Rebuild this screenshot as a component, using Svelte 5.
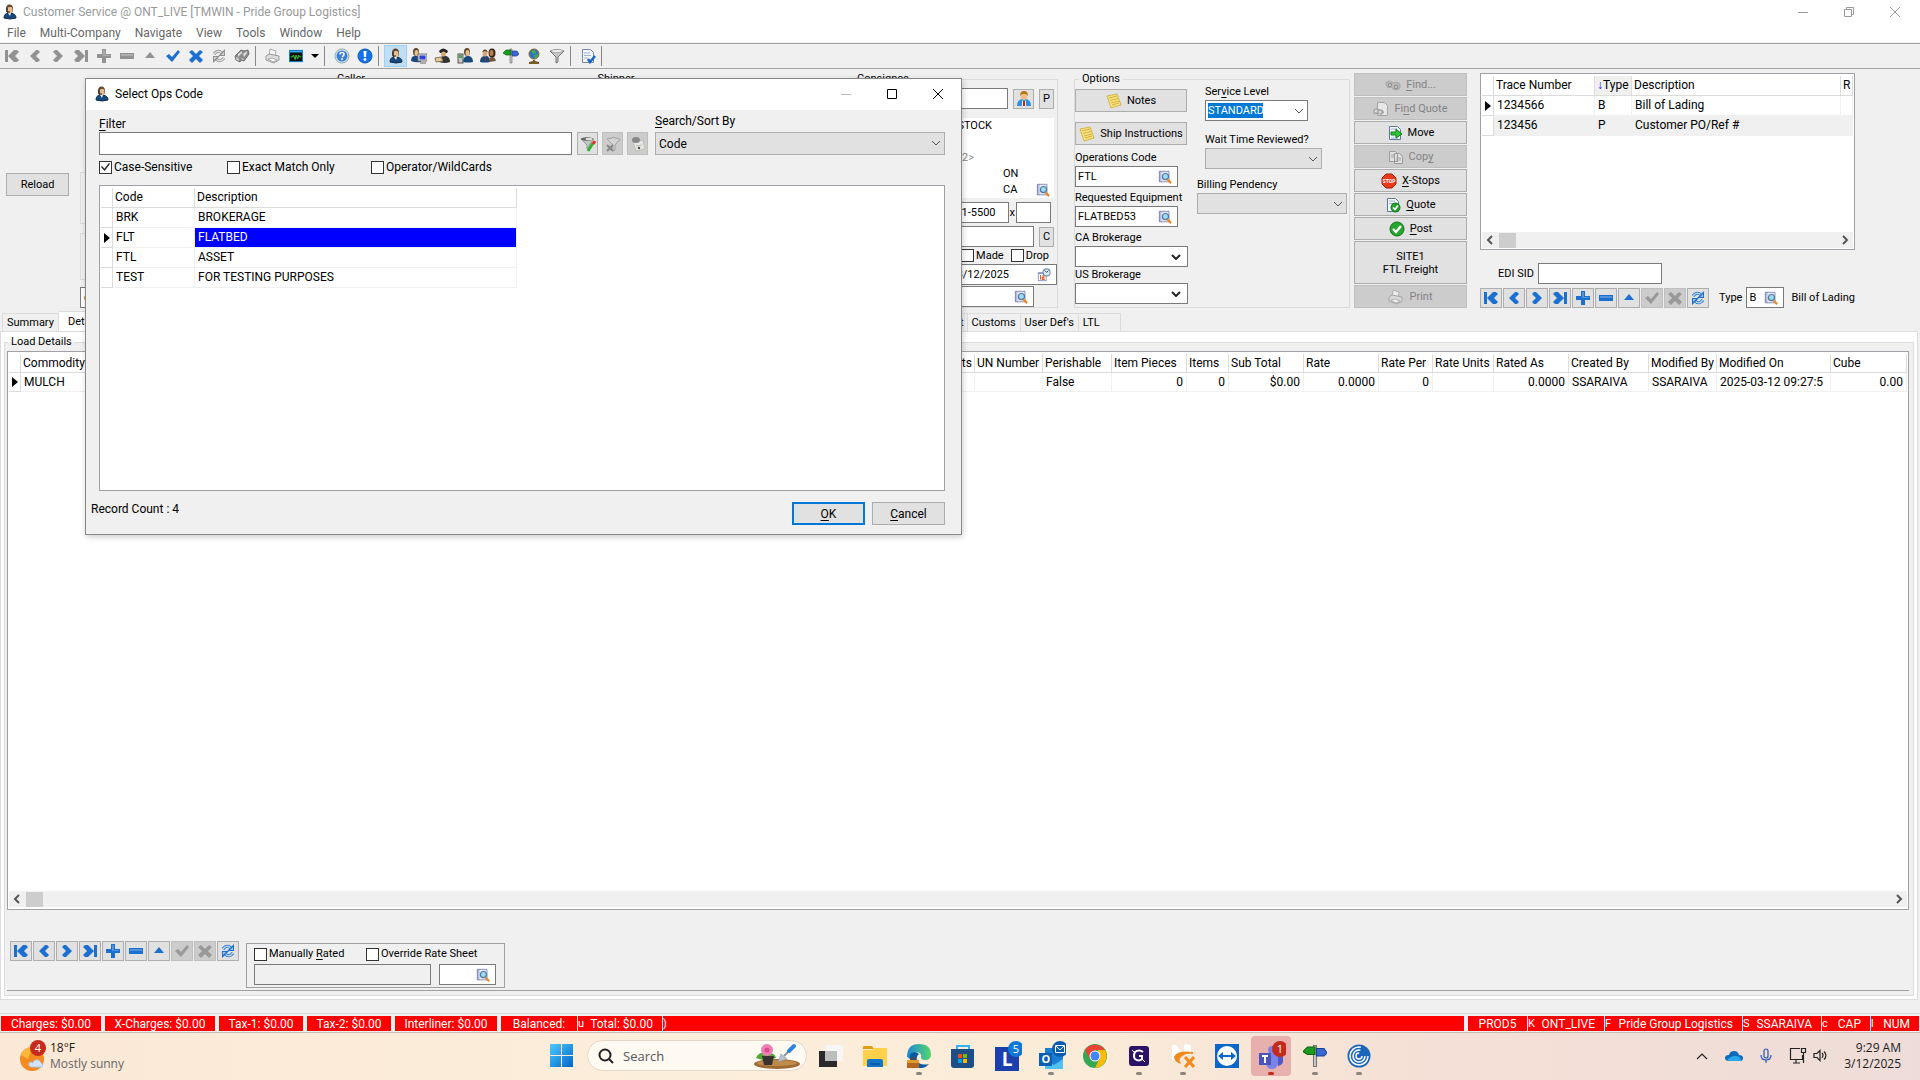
<script>
  const icons = {
    first: '<path fill="currentColor" d="M1 2h3v12H1zM10 2h3l2 2-4 4 4 4-2 2h-3L4 8z"/>',
    prev: '<path fill="currentColor" d="M9 2h2l2 2-4 4 4 4-2 2H9L3 8z"/>',
    next: '<path fill="currentColor" d="M7 2H5L3 4l4 4-4 4 2 2h2l6-6z"/>',
    last: '<path fill="currentColor" d="M12 2h3v12h-3zM6 2H3L1 4l4 4-4 4 2 2h3l6-6z"/>',
    add: '<path fill="currentColor" d="M6 1h4v5h5v4h-5v5H6v-5H1V6h5z"/><path fill="#fff" opacity=".25" d="M7 2h2v5h5v1H7z"/>',
    del: '<path fill="currentColor" d="M1 5h14v6H1z"/><path fill="#fff" opacity=".25" d="M2 6h12v2H2z"/>',
    edit: '<path fill="currentColor" d="M8 4l5 6H3z"/>',
    ok: '<path fill="currentColor" d="M1 8l3-2 3 3 6-7 2 2-8 10z"/>',
    cancel: '<path fill="currentColor" d="M1 4l3-2 4 4 4-4 3 2-4 4 4 4-3 3-4-4-4 4-3-3 4-4z"/>',
    refresh:
      '<path fill="none" stroke="currentColor" stroke-width="3" d="M3 6q4-5 8-1M13 10q-4 5-8 1"/><path fill="none" stroke="#fff" opacity=".7" stroke-width="1.400" d="M3 6q4-5 8-1M13 10q-4 5-8 1"/><path fill="currentColor" d="M14 1v7H7zM2 15V8h7z"/><path fill="#fff" opacity=".6" d="M13 4v3h-3zM3 12V9h3z"/>',
    binoculars:
      '<path fill="#8b8b8b" stroke="#6f6f6f" d="M1 8l6-6 3 1 4-1 1 4-5 7-3-1-1 2-4-2z"/><path fill="#ddd" d="M4 6l4-3v2L4 9zM9 6l4-3v2l-3 4z"/><path fill="#c4c4c4" d="M2 9l3 1v3l-3-1zM8 10l2 1-1 1-2-1z"/>',
    print:
      '<path fill="#f4f4f4" stroke="#aaa" d="M4 8L5 1l6 2-1 5z"/><path fill="#ddd" stroke="#999" d="M1 8l3-2 10 2v4l-5 3-8-3z"/><path fill="#fff" stroke="#aaa" d="M3 11l4-1 5 2-4 2z"/>',
    monitor:
      '<rect x="0.500" y="1.500" width="15" height="13" fill="#0a120a" stroke="#0a84e0"/><rect x="1" y="2" width="14" height="2" fill="#3aa0f0"/><path fill="none" stroke="#3ddc3d" d="M2 9h2l1-2 2 5 1-5 2 4 1-4 1 2h2"/>',
    help: '<circle cx="8" cy="8" r="7" fill="#dfe8f4" stroke="#8aa"/><circle cx="8" cy="8" r="5.500" fill="#3a7fd8"/><path fill="none" stroke="#fff" stroke-width="1.600" d="M6 6.500q0-2 2-2t2 2q0 1-2 2.300"/><circle cx="8" cy="11" r="1" fill="#fff"/>',
    info: '<circle cx="8" cy="8" r="7" fill="#1473e6" stroke="#0b56b0"/><path fill="#fff" d="M6.500 3h3L9 9H7z"/><circle cx="8" cy="11.500" r="1.400" fill="#fff"/>',
    agent:
      '<path fill="#174a7c" stroke="#0c2c50" d="M2 14q0-5 5-5h2q5 1 5 5-6 2-12 0z"/><ellipse cx="7.500" cy="5" rx="3.500" ry="4.500" fill="#5a4630"/><ellipse cx="8" cy="6" rx="2.500" ry="3.300" fill="#e9bd8e"/><path fill="none" stroke="#222" d="M5 4v4h3"/><path fill="#dfeaf4" d="M6 9h3l-1 3z"/>',
    agentPc:
      '<path fill="#174a7c" d="M0 13q0-5 4-5h2q4 1 4 6-5 1-10-1z"/><ellipse cx="5" cy="4" rx="3" ry="4" fill="#5a4630"/><ellipse cx="5.500" cy="5" rx="2" ry="3" fill="#e9bd8e"/><rect x="7" y="6" width="9" height="7" fill="#dcdcdc" stroke="#777"/><rect x="8.500" y="7.500" width="6" height="4" fill="#3144d8"/><path fill="#aaa" d="M9 14h6v2H9z"/>',
    driver:
      '<path fill="#333" d="M5 14q0-5 4-6h3q4 1 4 6-5 2-11 0z"/><path fill="#222" d="M5 3q4-5 9 0l-1 2H6z"/><ellipse cx="9.500" cy="6" rx="2.500" ry="2.500" fill="#d6a878"/><path fill="#e0c89a" stroke="#8a7a58" d="M1 10l6-1 2 4-7 1z"/>',
    agentPhone:
      '<path fill="#174a7c" d="M6 14q0-5 4-6h2q4 1 4 6-5 1-10 0z"/><ellipse cx="10" cy="4" rx="3" ry="4" fill="#5a4630"/><ellipse cx="10.500" cy="5" rx="2" ry="3" fill="#e9bd8e"/><rect x="1" y="6" width="5" height="9" fill="#c8ccc8" stroke="#555"/><rect x="2" y="7" width="3" height="3" fill="#47a846"/>',
    people:
      '<path fill="#174a7c" d="M0 14q0-5 4-6h3q3 1 3 6-5 1-10 0z"/><path fill="#a03030" d="M5 9h1v4H5z"/><ellipse cx="5" cy="5" rx="2.500" ry="3.500" fill="#d9a878"/><path fill="#4b3725" d="M2 4q3-5 6 0L5 3z"/><path fill="#7a5238" d="M9 14q0-5 3-5t4 4z"/><ellipse cx="12" cy="5" rx="3.500" ry="4.500" fill="#3a2618"/><ellipse cx="11.500" cy="5" rx="2" ry="3" fill="#b87e55"/>',
    sign: '<path fill="#c8c8c8" stroke="#777" stroke-width=".700" d="M7 1h2v14H7z"/><path fill="#1d9a1d" stroke="#0d630d" stroke-width=".700" d="M0 5l3-3h5v5H3z"/><path fill="#3a67d0" stroke="#1c3f96" stroke-width=".700" d="M9 3h5l2 3-2 2H9z"/>',
    globe:
      '<circle cx="8" cy="6" r="5" fill="#2f74c8" stroke="#8a6a2a"/><path fill="#3fae49" d="M5 3l4-1 1 3-3 1zM8 7l4-1-1 4-2 0z"/><path fill="#7a5a22" d="M7 12h2v1l4 1v2H3v-2l4-1z"/>',
    funnel:
      '<path fill="#c6c6c6" stroke="#777" d="M1 3q7-3 14 0L9 9v5l-2 1V9z"/><ellipse cx="8" cy="3" rx="6" ry="1.500" fill="#f2f2f2" stroke="#888" stroke-width=".600"/>',
    funnelGo:
      '<path fill="#c6c6c6" stroke="#999" d="M1 3q6-3 13 0L9 9v3l-2 1V9z"/><ellipse cx="7" cy="3" rx="6" ry="1.700" fill="#666"/><ellipse cx="9" cy="3" rx="3.500" ry="1.200" fill="#ddd"/><path stroke="#2db52d" stroke-width="3" d="M8 15l5-8"/><path stroke="#e03030" stroke-width="3" d="M13 8l2-3"/>',
    funnelOff:
      '<path fill="#d8d8d8" stroke="#999" d="M2 3q7-3 13 0l-5 6v5l-2 1V9z"/><path stroke="#777" stroke-width="2" d="M2 9l6 6M8 9l-6 6"/>',
    funnelDoc: '<path fill="#eeeee6" stroke="#bbb" d="M3 6l10-2 2 9-9 2z"/><ellipse cx="6" cy="4" rx="4" ry="3" fill="#777"/><path stroke="#bbb" d="M6 10l6-1"/><circle cx="9" cy="12" r="1.200" fill="#333"/>',
    docCheck:
      '<path fill="#f5f8fd" stroke="#7686a8" d="M2.500 1.500h8l3 3v10h-11z"/><path stroke="#9db0d0" d="M4 5h6M4 7.500h7M4 10h4"/><path fill="none" stroke="#1565c8" stroke-width="2.500" d="M8 11l2 3 5-6"/>',
    lookup:
      '<path fill="#b9bfe2" stroke="#7077a8" d="M1.500 1.500h11v12h-11z"/><path fill="#e3e6f5" d="M4 2h8v11H4z"/><circle cx="8.500" cy="7.500" r="3.500" fill="#9bdcf5" stroke="#56799a" stroke-width="1.400"/><path stroke="#e88a28" stroke-width="2.500" d="M11 11l4 4"/>',
    calendar:
      '<rect x="1.500" y="5.500" width="9" height="9" fill="#fff" stroke="#8090c0"/><path fill="#8f96c8" d="M1 5h10v2H1z"/><path fill="none" stroke="#e06030" stroke-width="1.200" d="M4 8v5M6 9h2v2H6v2h3"/><circle cx="11" cy="5" r="4" fill="#d9ecf8" stroke="#6c8fae" stroke-width="1.200"/><path fill="none" stroke="#333" d="M9 3l2 2 2-2"/>',
    person:
      '<path fill="#2f8fe0" d="M1 15q0-6 5-7h4q5 1 5 7z"/><ellipse cx="8" cy="5" rx="3" ry="4" fill="#f0bd80"/><path fill="#b8761c" d="M4 5q0-5 4-5t4 5l-2-2H6z"/><path fill="#fff" d="M6 9l2 3 2-3v6H6z"/><path fill="#d02020" d="M7 10h2v5H7z"/>',
    note: '<path fill="#f7e37a" stroke="#c9a93a" stroke-width=".800" d="M1 3l10-2 4 11-10 3z"/><path stroke="#d8ae48" d="M3 5l8-2M4 7.500l8-2M5 10l8-2M6 12l7-2"/>',
    findGray:
      '<path fill="#b5b5b5" stroke="#8f8f8f" stroke-width=".700" d="M1 5l4-1 3 2 4-1 3 2v4l-3 2-4-1-2-2-3 1-2-3z"/><circle cx="5" cy="8" r="2" fill="#777"/><circle cx="11" cy="10" r="2.200" fill="#808080"/><circle cx="5" cy="8" r="1" fill="#ddd"/><circle cx="11" cy="10" r="1" fill="#ddd"/>',
    findQuote:
      '<path fill="#eee" stroke="#999" d="M4.500 1.500h7l3 3v10h-10z"/><path fill="#999" d="M0 9l3-2 3 1 4 1 1 3-3 2-3-1-4 0z"/><circle cx="3" cy="10" r="1.500" fill="#ddd"/><circle cx="7" cy="11" r="1.500" fill="#ddd"/>',
    move: '<path fill="#f5f8fd" stroke="#5e7898" d="M2.500 1.500h8l3 3v10h-11z"/><path stroke="#9db0d0" d="M4 4h6M4 13h7"/><path fill="#2fc43a" stroke="#147a1c" d="M4 7h5V4l6 5-6 4v-3H4z"/>',
    copy: '<path fill="#e6e6e6" stroke="#8f8f8f" d="M1.500 2.500h6l2 2v8h-8zM6.500 4.500h5l3 3v7h-8z"/><path stroke="#999" d="M3 6h3M3 8h3M8 9h5M8 11h5"/>',
    quote:
      '<path fill="#f5f8fd" stroke="#5e7898" d="M2.500 1.500h8l3 3v10h-11z"/><path stroke="#9db0d0" d="M4 4h6M4 6.500h6"/><circle cx="10.500" cy="10.500" r="4.500" fill="#25a52d" stroke="#0e7416"/><path fill="none" stroke="#fff" stroke-width="1.600" d="M8 10.500l2 2 3-4"/>',
    post: '<circle cx="8" cy="8" r="7" fill="#25a52d" stroke="#0e7416"/><path fill="none" stroke="#fff" stroke-width="2.400" d="M4 8l3 3 5-6"/>',
  };

  const tools = ['first', 'prev', 'next', 'last', 'add', 'del', 'edit', 'ok', 'cancel', 'refresh', 'binoculars'];
  const people = ['agent', 'agentPc', 'driver', 'agentPhone', 'people', 'sign', 'globe', 'funnel'];
  const navs = ['first', 'prev', 'next', 'last', 'add', 'del', 'edit', 'ok', 'cancel', 'refresh'];
  const menus = ['File', 'Multi-Company', 'Navigate', 'View', 'Tools', 'Window', 'Help'];

  const codes = [
    ['BRK', 'BROKERAGE'],
    ['FLT', 'FLATBED'],
    ['FTL', 'ASSET'],
    ['TEST', 'FOR TESTING PURPOSES'],
  ];
  let selected = $state('FLT');
  let caseSensitive = $state(true);

  // title, width, value, right aligned
  const columns = [
    ['UN Number', 68, ''],
    ['Perishable', 69, 'False'],
    ['Item Pieces', 75, '0', true],
    ['Items', 42, '0', true],
    ['Sub Total', 75, '$0.00', true],
    ['Rate', 75, '0.0000', true],
    ['Rate Per', 54, '0', true],
    ['Rate Units', 61, ''],
    ['Rated As', 75, '0.0000', true],
    ['Created By', 80, 'SSARAIVA'],
    ['Modified By', 68, 'SSARAIVA'],
    ['Modified On', 114, '2025-03-12 09:27:5'],
    ['Cube', 76, '0.00', true],
  ];

  const totals = [
    ['Charges: $0.00', 100],
    ['X-Charges: $0.00', 110],
    ['Tax-1: $0.00', 84],
    ['Tax-2: $0.00', 84],
    ['Interliner: $0.00', 102],
    ['Balanced:', 76],
  ];
  const session = [
    ['PROD5', 59, ''],
    ['ONT_LIVE', 76, 'K'],
    ['Pride Group Logistics', 137, 'F'],
    ['SSARAIVA', 78, 'S'],
    ['CAP', 48, 'c'],
    ['NUM', 48, 'l'],
  ];
</script>

{#snippet icon(name, size = 16)}
  <svg class="icon" width={size} height={size} viewBox="0 0 16 16" aria-hidden="true">{@html icons[name]}</svg>
{/snippet}

{#snippet dropdown(label, value, kind)}
  <span class="dropdown {kind}">
    <select aria-label={label}><option>{value}</option></select>
    <svg width="10" height="6" viewBox="0 0 10 6"><path d="M1 1l4 4 4-4" /></svg>
  </span>
{/snippet}

{#snippet lookup(label, value, glyph = 'lookup')}
  <span class="field">
    <input type="text" aria-label={label} {value} />
    <button aria-label="Look up {label}">{@render icon(glyph, 14)}</button>
  </span>
{/snippet}

{#snippet navigator()}
  <div class="navigator">
    {#each navs as name}
      <button class={name} aria-label={name} disabled={name === 'ok' || name === 'cancel'}>{@render icon(name)}</button>
    {/each}
  </div>
{/snippet}

{#snippet scrollbar()}
  <div class="scrollbar">
    <svg width="8" height="10" viewBox="0 0 8 10"><path d="M6 1L2 5l4 4" /></svg>
    <span class="thumb"></span>
    <svg width="8" height="10" viewBox="0 0 8 10"><path d="M2 1l4 4-4 4" /></svg>
  </div>
{/snippet}

<div class="desktop">
  <header class="titlebar">
    {@render icon('agent')}
    <h1>Customer Service @ ONT_LIVE [TMWIN - Pride Group Logistics]</h1>
    <div class="caption">
      <button aria-label="Minimize"><svg width="10" height="10" viewBox="0 0 10 10"><path d="M0 5.500h10" /></svg></button>
      <button aria-label="Restore"
        ><svg width="10" height="10" viewBox="0 0 10 10"><path d="M.500 2.500h7v7h-7zM2.500 2.500v-2h7v7h-2" /></svg></button
      >
      <button aria-label="Close"><svg width="10" height="10" viewBox="0 0 10 10"><path d="M0 0l10 10M10 0L0 10" /></svg></button>
    </div>
  </header>

  <nav class="menubar">
    {#each menus as menu}<button>{menu}</button>{/each}
  </nav>

  <div class="toolbar">
    {#each tools as name}
      <button class={name} aria-label={name}>{@render icon(name)}</button>
    {/each}
    <span class="sep"></span>
    <button aria-label="Print">{@render icon('print')}</button>
    <button aria-label="Monitor">{@render icon('monitor', 14)}</button>
    <button class="more" aria-label="More"><span class="caret"></span></button>
    <span class="sep"></span>
    <button aria-label="Help">{@render icon('help')}</button>
    <button aria-label="Information">{@render icon('info')}</button>
    <span class="sep"></span>
    {#each people as name}
      <button class={name} aria-label={name}>{@render icon(name)}</button>
    {/each}
    <span class="sep"></span>
    <button aria-label="Report">{@render icon('docCheck')}</button>
    <span class="sep"></span>
  </div>

  <section class="order">
    <div class="parties">
      <div class="reload"><button class="push">Reload</button></div>
      <div class="stubs">
        <div class="stub tall"></div>
        <div class="stub"></div>
        <input type="text" aria-label="Carrier" value="c" />
      </div>
      <fieldset class="party"><legend>Caller</legend></fieldset>
      <fieldset class="party"><legend>Shipper</legend></fieldset>
    </div>

    <fieldset class="consignee">
      <legend>Consignee</legend>
      <div class="row">
        <input type="text" aria-label="Consignee code" />
        <button class="push square" aria-label="Contact">{@render icon('person')}</button>
        <button class="push letter">P</button>
      </div>
      <div class="address">
        <span class="right">STOCK</span><span></span>
        <span></span><span></span>
        <span class="right hint">2&gt;</span><span></span>
        <span></span><span>ON</span>
        <span></span><span class="country">CA {@render icon('lookup', 14)}</span>
      </div>
      <div class="row phone">
        <input type="text" class="right" aria-label="Phone" value="1-5500" />
        <label for="ext">x</label>
        <input type="text" id="ext" class="ext" />
      </div>
      <div class="row">
        <input type="text" aria-label="Email" />
        <button class="push letter">C</button>
      </div>
      <div class="row checks">
        <label><input type="checkbox" />Made</label>
        <label><input type="checkbox" />Drop</label>
      </div>
      <div class="row date">{@render lookup('Deliver by', '3/12/2025', 'calendar')}</div>
      <div class="row zone">{@render lookup('Zone', '')}</div>
    </fieldset>

    <fieldset class="options">
      <legend>Options</legend>
      <div class="codes">
        <button class="push">{@render icon('note')}Notes</button>
        <button class="push">{@render icon('note')}Ship Instructions</button>
        <span class="label">Operations Code</span>
        {@render lookup('Operations Code', 'FTL')}
        <span class="label">Requested Equipment</span>
        {@render lookup('Requested Equipment', 'FLATBED53')}
        <span class="label">CA Brokerage</span>
        {@render dropdown('CA Brokerage', '', 'bold')}
        <span class="label">US Brokerage</span>
        {@render dropdown('US Brokerage', '', 'bold')}
      </div>
      <div class="levels">
        <span class="label service">Ser<u>v</u>ice Level</span>
        {@render dropdown('Service Level', 'STANDARD', 'active')}
        <span class="label">Wait Time Reviewed?</span>
        {@render dropdown('Wait Time Reviewed?', '', 'gray')}
        <div class="billing">
          <span class="label">Billing Pendency</span>
          {@render dropdown('Billing Pendency', '', 'gray')}
        </div>
      </div>
    </fieldset>

    <div class="actions">
      <button class="push" disabled>{@render icon('findGray')}<span><u>F</u>ind...</span></button>
      <button class="push" disabled>{@render icon('findQuote')}<span>Fi<u>n</u>d Quote</span></button>
      <button class="push">{@render icon('move')}Move</button>
      <button class="push" disabled>{@render icon('copy')}<span>Cop<u>y</u></span></button>
      <button class="push">
        <svg class="icon" width="16" height="16" viewBox="0 0 16 16" aria-hidden="true">
          <path fill="#e8391d" stroke="#a81e0c" d="M5 1h6l4 4v6l-4 4H5l-4-4V5z" />
          <text x="8" y="10" font-size="5" font-weight="bold" text-anchor="middle" fill="#fff">STOP</text>
        </svg>
        <span><u>X</u>-Stops</span>
      </button>
      <button class="push">{@render icon('quote')}<span><u>Q</u>uote</span></button>
      <button class="push">{@render icon('post')}<span><u>P</u>ost</span></button>
      <button class="push site">SITE1<br />FTL Freight</button>
      <button class="push" disabled>{@render icon('print')}Print</button>
    </div>

    <div class="trace">
      <div class="grid">
        <table>
          <colgroup><col class="mark" /><col class="number" /><col class="kind" /><col /><col class="rest" /></colgroup>
          <thead>
            <tr><th></th><th>Trace Number</th><th class="sorted"><i>↓</i>Type</th><th>Description</th><th>R</th></tr>
          </thead>
          <tbody>
            <tr><td><span class="pointer"></span></td><td>1234566</td><td>B</td><td>Bill of Lading</td><td></td></tr>
            <tr class="alt"><td></td><td>123456</td><td>P</td><td>Customer PO/Ref #</td><td></td></tr>
          </tbody>
        </table>
        {@render scrollbar()}
      </div>
      <div class="row edi">
        <label for="edi">EDI SID</label>
        <input type="text" id="edi" />
      </div>
      <div class="row document">
        {@render navigator()}
        <span>Type</span>
        {@render lookup('Type', 'B')}
        <span>Bill of Lading</span>
      </div>
    </div>
  </section>

  <div class="tabs">
    <button>Summary</button>
    <button class="current">Details</button>
    <button class="wide">Audit</button>
    <button>Customs</button>
    <button>User Def's</button>
    <button class="end">LTL</button>
  </div>

  <main class="page">
    <fieldset class="details">
      <legend>Load Details</legend>
      <div class="grid load">
        <table>
          <colgroup>
            <col class="mark" /><col /><col class="units" />
            {#each columns as [, width]}<col style="width: {width}px" />{/each}
          </colgroup>
          <thead>
            <tr>
              <th></th><th>Commodity</th><th class="num">Units</th>
              {#each columns as [title]}<th>{title}</th>{/each}
            </tr>
          </thead>
          <tbody>
            <tr>
              <td><span class="pointer"></span></td><td>MULCH</td><td></td>
              {#each columns as [, , value, num]}<td class:num>{value}</td>{/each}
            </tr>
          </tbody>
        </table>
        {@render scrollbar()}
      </div>
      <div class="rating">
        {@render navigator()}
        <div class="rates">
          <label><input type="checkbox" /><span>Manually <u>R</u>ated</span></label>
          <label><input type="checkbox" />Override Rate Sheet</label>
          <input type="text" class="sheet" aria-label="Rate" readonly />
          {@render lookup('Rate Sheet', '')}
        </div>
      </div>
    </fieldset>
  </main>

  <footer class="status">
    {#each totals as [text, width]}
      <span class="cell" style="width: {width}px">{text}</span>
    {/each}
    <span class="cell joined total"><i>u</i>Total: $0.00</span>
    <span class="cell joined fill"><i>)</i></span>
    {#each session as [text, width, cut]}
      <span class="cell" class:joined={cut} style="width: {width}px">{#if cut}<i>{cut}</i>{/if}{text}</span>
    {/each}
  </footer>

  <div class="taskbar">
    <button class="weather">
      <svg width="27" height="34" viewBox="0 0 27 34" aria-hidden="true">
        <circle cx="12" cy="20" r="12" fill="#f58a1f" />
        <path fill="#fbb738" d="M1 16A12 12 0 0 1 12 8l-4 12z" />
        <path fill="#d5e4fa" stroke="#a9c2ea" d="M11 28q-3-1-2-4 2-2 4 0 1-4 5-3 3 1 3 3 3 1 1 4z" />
        <circle cx="18" cy="9" r="8" fill="#c42b1c" />
        <text x="18" y="13" font-size="11" text-anchor="middle" fill="#fff">4</text>
      </svg>
      <span>18°F<br /><small>Mostly sunny</small></span>
    </button>
    <div class="apps">
      <button aria-label="Start">
        <svg width="24" height="24" viewBox="0 0 24 24">
          <defs><linearGradient id="win" x2="1" y2="1"><stop stop-color="#4cc9ff" /><stop offset="1" stop-color="#0067c8" /></linearGradient></defs>
          <path fill="url(#win)" d="M0 0h11v11H0zM12 0h11v11H12zM0 12h11v11H0zM12 12h11v11H12z" />
        </svg>
      </button>
      <label class="search">
        <svg width="16" height="16" viewBox="0 0 16 16"><circle cx="7" cy="7" r="5.500" /><path d="M11 11l4 4" /></svg>
        <input type="text" aria-label="Search" placeholder="Search" />
        <svg class="art" width="48" height="26" viewBox="0 0 48 26">
          <ellipse cx="24" cy="21" rx="23" ry="5" fill="#9c6a34" />
          <ellipse cx="24" cy="20" rx="20" ry="3" fill="#c08a4a" />
          <path fill="#4fa834" d="M3 15q4-8 10-3 8-4 10 3-10 4-20 0z" />
          <path fill="#3a3230" d="M9 13h12l-2 9h-8z" />
          <circle cx="14" cy="7" r="6" fill="#ee7fb4" /><circle cx="14" cy="7" r="2.500" fill="#d94a8e" />
          <path fill="#b8c2cc" stroke="#7c8894" stroke-width=".500" d="M25 19l3-8 6 5z" />
          <path stroke="#8a949e" stroke-width="2" d="M31 13l5-5" />
          <path stroke="#2a86d8" stroke-width="4" stroke-linecap="round" d="M36 8l5-5" />
        </svg>
      </label>
      <button aria-label="Task view">
        <svg width="24" height="24" viewBox="0 0 24 24"><path fill="#2a2a2a" d="M0 7h18v16H0z" /><path fill="#f6f6f6" d="M6 1h18v16H6z" /><path fill="#bdbdbd" d="M6 7h12v10H6z" /></svg>
      </button>
      <button aria-label="File Explorer">
        <svg width="24" height="24" viewBox="0 0 24 24"><path fill="#e09b10" d="M0 3q0-1 1-1h8l2 3H0z" /><path fill="#ffd04a" d="M0 6h8l3-2h13v18H0z" /><path fill="#1176c8" d="M4 17q0-2 2-2h12q2 0 2 2v6H4z" /><path fill="#0a5ba8" d="M7 19h10v2H7z" /></svg>
      </button>
      <button class="running" aria-label="Edge">
        <svg width="24" height="24" viewBox="0 0 24 24">
          <defs><linearGradient id="edge" x2="1"><stop stop-color="#1c8ad8" /><stop offset="1" stop-color="#55d66a" /></linearGradient></defs>
          <path fill="url(#edge)" d="M0 13Q0 0 12 0t12 11q0 5-6 5-4 0-4-3 1-4-4-5-6 0-7 7z" />
          <path fill="#0c59a4" d="M3 10q5-4 9 0-3 2-2 6 2 6 12 4-4 5-11 4Q1 20 3 10z" />
          <path fill="#b5651d" d="M0 16h12v8H0z" /><path fill="#e39a2c" d="M0 16h12v3H0z" /><path fill="none" stroke="#7a4210" d="M4 16v-2h4v2" />
        </svg>
      </button>
      <button aria-label="Store">
        <svg width="24" height="24" viewBox="0 0 24 24"><path fill="none" stroke="#33b2f0" stroke-width="2" d="M6 7V2h12v5" /><path fill="#1d4f86" d="M0 5h23v16q0 3-3 3H3q-3 0-3-3z" /><path fill="#f25022" d="M7 10h4v4H7z" /><path fill="#7fba00" d="M12 10h4v4h-4z" /><path fill="#00a4ef" d="M7 15h4v4H7z" /><path fill="#ffb900" d="M12 15h4v4h-4z" /></svg>
      </button>
      <button aria-label="Lookout">
        <svg width="30" height="30" viewBox="0 0 30 30"><path fill="#1d3fae" d="M3 6h24v24H3z" /><text x="15" y="25" font-size="19" font-weight="bold" text-anchor="middle" fill="#fff">L</text><circle cx="24" cy="8" r="8" fill="#0f78d4" /><text x="24" y="12" font-size="11" text-anchor="middle" fill="#fff">5</text></svg>
      </button>
      <button class="running" aria-label="Outlook">
        <svg width="30" height="30" viewBox="0 0 30 30"><path fill="#1a7fd4" d="M9 7h18v21H9z" /><path fill="#50c0f0" d="M9 18l9 6 9-6v10H9z" /><path fill="#0a5fb4" d="M3 12h13v13H3z" /><text x="10" y="22" font-size="11" font-weight="bold" text-anchor="middle" fill="#fff">O</text><circle cx="24" cy="8" r="8" fill="#0b5cb0" /><path fill="none" stroke="#fff" d="M19.500 4.500h9v7h-9zM20 5l4 4 4-4" /></svg>
      </button>
      <button aria-label="Chrome">
        <svg width="24" height="24" viewBox="0 0 24 24"><circle cx="12" cy="12" r="12" fill="#34a853" /><path fill="#ea4335" d="M2 6a12 12 0 0 1 20 0H12l-5 9z" /><path fill="#fbbc05" d="M22 6A12 12 0 0 1 12 24l5-10-2-8z" /><circle cx="12" cy="12" r="5.500" fill="#fff" /><circle cx="12" cy="12" r="4.500" fill="#4285f4" /></svg>
      </button>
      <button class="running" aria-label="Glance">
        <svg width="20" height="20" viewBox="0 0 20 20"><rect width="20" height="20" rx="3" fill="#2a1266" /><path fill="none" stroke="#fff" stroke-width="2" d="M14 6q-4-3-8 0-2 4 0 7 4 3 7 0v-3h-3" /><path stroke="#fff" d="M13 13l3 3M3 4l2 2" /></svg>
      </button>
      <button class="running" aria-label="NX">
        <svg width="24" height="24" viewBox="0 0 24 24"><path fill="#fff" d="M1 1q5-1 7 4l5 5V1q4-2 7 1v9H1z" /><path fill="#fff" d="M1 9h4v8H1z" /><path fill="#f08a1c" d="M22 8Q6 6 3 13q0 5 7 7-4-6 3-9 4-2 9-1z" /><path stroke="#f08a1c" stroke-width="3" d="M14 13l9 10M23 13l-9 10" /></svg>
      </button>
      <button aria-label="TeamViewer">
        <svg width="24" height="24" viewBox="0 0 24 24"><rect width="24" height="24" fill="#0a66c8" /><circle cx="12" cy="12" r="10" fill="#fff" /><path fill="#0a66c8" d="M3 12l5-4v3h8V8l5 4-5 4v-3H8v3z" /></svg>
      </button>
      <button class="running alert" aria-label="Teams">
        <svg width="30" height="30" viewBox="0 0 30 30"><circle cx="16" cy="9" r="4" fill="#7b83eb" /><path fill="#5059c9" d="M18 13h9v7q0 4-5 5z" /><path fill="#7b83eb" d="M10 13h12v9q-1 6-6 6t-6-5z" /><path fill="#4b53bc" d="M3 12h12v12H3z" /><path fill="none" stroke="#fff" stroke-width="2" d="M6 15h6M9 15v7" /><circle cx="24" cy="8" r="8" fill="#c42b1c" /><text x="24" y="12" font-size="11" text-anchor="middle" fill="#fff">1</text></svg>
      </button>
      <button class="running" aria-label="TMWIN">{@render icon('sign', 24)}</button>
      <button class="running" aria-label="Citrix">
        <svg width="24" height="24" viewBox="0 0 24 24"><circle cx="12" cy="12" r="11.500" fill="#1b66b8" /><circle class="ring" cx="12" cy="12" r="9" stroke-dasharray="44 13" /><circle class="ring" cx="12" cy="12" r="6" stroke-dasharray="29 9" /><circle class="ring" cx="12" cy="12" r="3" stroke-dasharray="14 5" /></svg>
      </button>
    </div>
    <div class="tray">
      <svg width="12" height="8" viewBox="0 0 12 8"><path d="M1 7l5-5 5 5" /></svg>
      <svg width="18" height="12" viewBox="0 0 18 12"><path class="cloud" d="M4 11q-4 0-4-3t4-3q1-4 5-4t5 4q4 0 4 3t-3 3z" /><path class="light" d="M2 10q4-4 8-4 6 0 6 5H4z" /></svg>
      <svg class="mic" width="12" height="16" viewBox="0 0 12 16"><rect x="4" y="1" width="4" height="9" rx="2" /><path d="M1 7q0 5 5 5t5-5M6 12v3" /></svg>
      <svg width="18" height="17" viewBox="0 0 18 17"><path d="M11 1.500H1.500v11h12V8M7 13v3M4 16h7M12.500 1.500h4v4h-4zM14.500 6v10" /></svg>
      <svg class="sound" width="16" height="13" viewBox="0 0 16 13"><path d="M1 4.500h3l3-3v10l-3-3H1zM9 4q2 2 0 5M11 2.500q4 4 0 8" /></svg>
      <time>9:29 AM<br />3/12/2025</time>
    </div>
  </div>

  <div class="dialog" role="dialog" aria-label="Select Ops Code">
    <header>
      {@render icon('agent')}
      <h2>Select Ops Code</h2>
      <div class="caption">
        <button class="off" aria-label="Minimize"><svg width="10" height="10" viewBox="0 0 10 10"><path d="M0 5.500h10" /></svg></button>
        <button aria-label="Maximize"><svg width="10" height="10" viewBox="0 0 10 10"><path d="M.500 .500h9v9h-9z" /></svg></button>
        <button aria-label="Close"><svg width="10" height="10" viewBox="0 0 10 10"><path d="M0 0l10 10M10 0L0 10" /></svg></button>
      </div>
    </header>
    <div class="filters">
      <div class="filter">
        <label for="filter"><u>F</u>ilter</label>
        <div class="row">
          <input type="text" id="filter" />
          <button class="push tool" aria-label="Apply filter">{@render icon('funnelGo')}</button>
          <button class="push tool" aria-label="Clear filter" disabled>{@render icon('funnelOff')}</button>
          <button class="push tool" aria-label="Save filter" disabled>{@render icon('funnelDoc')}</button>
        </div>
        <div class="row matches">
          <label><input type="checkbox" bind:checked={caseSensitive} />Case-Sensitive</label>
          <label><input type="checkbox" />Exact Match Only</label>
          <label><input type="checkbox" />Operator/WildCards</label>
        </div>
      </div>
      <div class="sort">
        <span><u>S</u>earch/Sort By</span>
        {@render dropdown('Search/Sort By', 'Code', 'gray')}
      </div>
    </div>
    <div class="grid list">
      <table>
        <colgroup><col class="mark" /><col class="code" /><col /></colgroup>
        <thead><tr><th></th><th>Code</th><th>Description</th></tr></thead>
        <tbody>
          {#each codes as [code, description]}
            <tr class:selected={selected === code} onclick={() => (selected = code)}>
              <td>{#if selected === code}<span class="pointer"></span>{/if}</td>
              <td>{code}</td>
              <td>{description}</td>
            </tr>
          {/each}
        </tbody>
      </table>
    </div>
    <div class="answer">
      <span>Record Count : {codes.length}</span>
      <button class="push primary"><u>O</u>K</button>
      <button class="push"><u>C</u>ancel</button>
    </div>
  </div>
</div>

<style>
  :global(body) {
    background: #f0f0f0;
  }
  .desktop {
    position: relative;
    display: flex;
    flex-direction: column;
    min-height: 100vh;
    overflow: hidden;
    background: #f0f0f0;
    color: #000;
    font: 11px/14px Roboto, 'Noto Sans', sans-serif;
  }
  .desktop * {
    box-sizing: border-box;
  }
  button,
  input,
  select {
    margin: 0;
    padding: 0;
    border: 0;
    border-radius: 0;
    background: none;
    color: inherit;
    font: inherit;
  }
  svg {
    display: block;
    flex: none;
  }
  h1,
  h2 {
    margin: 0;
    font-size: 12px;
    font-weight: 400;
  }
  u {
    text-underline-offset: 2px;
  }
  fieldset {
    min-width: 0;
    margin: 0;
    padding: 0;
    border: 1px solid #dcdcdc;
  }
  legend {
    padding: 0 3px;
    line-height: 14px;
  }
  input[type='text'] {
    min-width: 0;
    height: 21px;
    padding: 0 3px;
    border: 1px solid #7a7a7a;
    background: #fff;
  }
  input[type='checkbox'] {
    appearance: none;
    display: grid;
    place-items: center;
    flex: none;
    width: 13px;
    height: 13px;
    border: 1px solid #333;
    background: #fff;
  }
  input[type='checkbox']:checked::before {
    content: '';
    width: 9px;
    height: 8px;
    background: #222;
    clip-path: polygon(0 50%, 10% 38%, 38% 72%, 88% 0, 100% 10%, 40% 100%);
  }
  .row,
  .row label,
  .rates label {
    display: flex;
    align-items: center;
  }
  .row label,
  .rates label {
    gap: 2px;
  }
  .right {
    text-align: right;
  }
  .push {
    display: flex;
    align-items: center;
    justify-content: center;
    gap: 5px;
    height: 23px;
    padding-top: 1px;
    border: 1px solid #adadad;
    background: #e1e1e1;
  }
  .push:disabled {
    border-color: #bfbfbf;
    background: #ccc;
    color: #838383;
  }
  .push:disabled .icon {
    opacity: 0.8;
  }
  .field {
    display: flex;
    align-items: center;
    height: 21px;
    border: 1px solid #7a7a7a;
    background: #fff;
  }
  .field input[type='text'] {
    flex: 1;
    width: 0;
    height: 19px;
    padding: 0 2px;
    border: 0;
  }
  .field button {
    margin-right: 5px;
  }
  .dropdown {
    display: flex;
    position: relative;
    height: 21px;
  }
  .dropdown select {
    appearance: none;
    width: 100%;
    padding: 0 2px;
    border: 1px solid #7a7a7a;
    background: #fff;
  }
  .dropdown svg {
    position: absolute;
    right: 4px;
    top: 8px;
    pointer-events: none;
    fill: none;
    stroke: #555;
  }
  .dropdown.gray select {
    border-color: #adadad;
    background: #e1e1e1;
  }
  .dropdown.bold svg {
    right: 7px;
    stroke: #222;
    stroke-width: 2;
  }
  .dropdown.active select {
    background: linear-gradient(#0078d7, #0078d7) 2px 2px / 55px 15px no-repeat #fff;
    color: #fff;
  }

  .titlebar {
    display: flex;
    align-items: center;
    gap: 5px;
    height: 23px;
    padding: 0 2px;
    background: #fff;
    color: #999;
  }
  .caption {
    display: flex;
    margin-left: auto;
  }
  .caption button {
    display: grid;
    place-items: center;
    width: 46px;
    height: 22px;
  }
  .caption svg {
    fill: none;
    stroke: #999;
  }
  .menubar {
    display: flex;
    gap: 14px;
    height: 20px;
    padding-left: 7px;
    border-bottom: 1px solid #f0f0f0;
    background: #fff;
    color: #666;
    font-size: 12px;
    line-height: 20px;
  }
  .toolbar {
    display: flex;
    align-items: center;
    height: 26px;
    border: solid #a0a0a0;
    border-width: 1px 0;
    color: #929292;
  }
  .toolbar button {
    display: grid;
    place-items: center;
    width: 23px;
    height: 22px;
  }
  .toolbar .ok,
  .toolbar .cancel {
    color: #1a6fd0;
  }
  .toolbar .agent {
    border: 1px solid #99d1ff;
    background: #c2def5;
  }
  .toolbar .more {
    width: 15px;
  }
  .caret {
    border: 4px solid transparent;
    border-top-color: #000;
    border-bottom: 0;
  }
  .sep {
    width: 1px;
    height: 20px;
    margin: 0 5px 0 2px;
    background: #888;
  }

  .order {
    display: flex;
    align-items: flex-start;
    height: 242px;
    padding-top: 3px;
  }
  .order > * {
    flex: none;
  }
  .parties {
    display: flex;
    width: 705px;
    height: 236px;
  }
  .reload {
    width: 80px;
    padding: 101px 0 0 6px;
  }
  .reload .push {
    width: 63px;
  }
  .stubs {
    display: flex;
    flex-direction: column;
    width: 186px;
    padding-top: 100px;
  }
  .stub {
    height: 48px;
    margin-bottom: 7px;
    border: 1px solid #dcdcdc;
  }
  .stub.tall {
    height: 52px;
    margin-bottom: 9px;
  }
  .party {
    flex: none;
    width: 170px;
    text-align: center;
  }
  .party + .party {
    margin-left: 95px;
  }
  .consignee {
    width: 353px;
    height: 236px;
    margin-right: 16px;
    padding: 2px 0 0 3px;
  }
  .consignee legend {
    margin: 0 auto;
  }
  .consignee .row {
    gap: 5px;
    margin-right: 3px;
  }
  .consignee .row > input:first-child {
    flex: 1;
  }
  .consignee .square {
    width: 21px;
    height: 20px;
  }
  .letter {
    width: 15px;
    height: 20px;
  }
  .address {
    display: grid;
    grid-template-columns: 1fr 51px;
    grid-auto-rows: 16px;
    align-items: center;
    margin: 9px 3px 4px 0;
    background: #fff;
  }
  .address .right {
    padding-right: 11px;
  }
  .address .hint {
    padding-right: 29px;
    color: #888;
  }
  .country {
    display: flex;
    gap: 19px;
  }
  .consignee .phone {
    gap: 1px;
    margin: 0 6px 3px 0;
  }
  .phone .right {
    padding-right: 12px;
  }
  .phone .ext {
    width: 35px;
  }
  .consignee .checks {
    justify-content: flex-end;
    gap: 7px;
    height: 17px;
    padding-right: 5px;
  }
  .consignee .date {
    margin-right: 0;
  }
  .date .field,
  .zone .field {
    flex: 1;
  }
  .date .field input[type='text'] {
    padding-right: 28px;
    text-align: right;
  }
  .consignee .zone {
    margin: 1px 23px 0 0;
  }

  .options {
    width: 276px;
    height: 236px;
    margin-right: 4px;
  }
  .options legend {
    margin-left: 4px;
  }
  .codes {
    float: left;
    width: 113px;
    padding-top: 3px;
  }
  .codes .push {
    width: 112px;
    margin-bottom: 10px;
  }
  .codes .push + .push {
    margin-bottom: 4px;
  }
  .label {
    display: block;
    height: 17px;
    line-height: 17px;
    white-space: nowrap;
  }
  .codes .field {
    width: 103px;
    margin-bottom: 2px;
  }
  .codes .dropdown {
    margin-bottom: -1px;
  }
  .levels {
    float: right;
    width: 145px;
    padding-left: 1px;
  }
  .levels .service {
    height: 14px;
    line-height: 12px;
  }
  .levels .dropdown {
    width: 117px;
    margin-bottom: 10px;
  }
  .levels .dropdown.active {
    width: 103px;
  }
  .billing {
    margin: -3px 2px 0 -8px;
  }
  .billing .dropdown {
    width: auto;
  }

  .actions {
    display: flex;
    flex-direction: column;
    gap: 1px;
    width: 113px;
    margin: 1px 13px 0 0;
  }
  .actions .site {
    height: 43px;
    line-height: 13px;
  }

  .trace {
    width: 375px;
    margin-top: 1px;
  }
  .grid {
    display: flex;
    flex-direction: column;
    justify-content: space-between;
    padding: 2px 1px 1px;
    border: 1px solid #a0a0a6;
    background: #fff;
    font-size: 12px;
    line-height: 19px;
  }
  .trace .grid {
    height: 177px;
  }
  table {
    width: 100%;
    table-layout: fixed;
    border-collapse: separate;
    border-spacing: 0;
  }
  th,
  td {
    height: 20px;
    padding: 0 2px;
    border: solid #f0f0f0;
    border-width: 0 1px 1px 0;
    overflow: hidden;
    font-weight: 400;
    text-align: left;
    white-space: nowrap;
  }
  td {
    padding: 0 3px;
  }
  th,
  td:first-child {
    border-color: #dcdcdc;
  }
  td:first-child {
    padding: 0 0 0 3px;
  }
  .num {
    text-align: right;
  }
  .mark {
    width: 12px;
  }
  .number {
    width: 101px;
  }
  .kind {
    width: 37px;
  }
  .rest {
    width: 12px;
  }
  .sorted {
    background: #f0f0f0;
  }
  .sorted i {
    color: #00f;
    font-style: normal;
    font-weight: 700;
  }
  .trace .alt td + td {
    background: #f0f0f0;
  }
  .pointer {
    display: block;
    width: 0;
    border: 5px solid transparent;
    border-left: 6px solid #000;
    border-right: 0;
  }
  .scrollbar {
    display: flex;
    align-items: center;
    height: 16px;
    padding: 0 4px;
    background: #f0f0f0;
  }
  .scrollbar svg {
    fill: none;
    stroke: #555;
    stroke-width: 2;
  }
  .thumb {
    width: 17px;
    height: 15px;
    margin: 0 auto 0 5px;
    background: #cdcdcd;
  }
  .edi {
    gap: 4px;
    margin: 13px 0 3px 18px;
  }
  .edi input[type='text'] {
    width: 124px;
  }
  .document {
    white-space: nowrap;
  }
  .document .navigator {
    margin-right: 10px;
  }
  .document .field {
    width: 40px;
    margin: 0 8px 0 4px;
  }
  .navigator {
    display: flex;
    gap: 1px;
  }
  .navigator button {
    display: grid;
    place-items: center;
    width: 22px;
    height: 20px;
    border: 1px solid #adadad;
    background: #e1e1e1;
    color: #1a6fd0;
  }
  .navigator button:disabled {
    border-color: #bfbfbf;
    background: #ccc;
    color: #999;
  }

  .tabs {
    display: flex;
    align-items: flex-end;
    height: 20px;
    padding-left: 2px;
  }
  .tabs button {
    height: 18px;
    padding: 1px 4px 0;
    border: solid #dcdcdc;
    border-width: 1px 1px 0 0;
  }
  .tabs button:first-child {
    border-left-width: 1px;
  }
  .tabs .current {
    height: 20px;
    padding: 0 9px;
    background: #fff;
  }
  .tabs .wide {
    width: 856px;
    padding-right: 3px;
    text-align: right;
  }
  .tabs .end {
    padding-right: 20px;
  }
  .page {
    display: flex;
    flex: 1;
    margin: 0 2px 13px 0;
    padding: 3px;
    border: 1px solid #dcdcdc;
    background: #fff;
  }
  .details {
    display: flex;
    flex: 1;
    flex-direction: column;
    padding: 2px 4px 4px 2px;
    background: #f0f0f0;
  }
  .details legend {
    margin-left: 1px;
  }
  .load {
    flex: 1;
    padding: 2px 1px;
  }
  .load th,
  .load td {
    height: 19px;
    line-height: 18px;
  }
  .units {
    width: 60px;
  }
  .rating {
    display: flex;
    align-items: flex-start;
    gap: 7px;
    height: 81px;
    padding: 31px 0 0 3px;
    border-bottom: 1px solid #a0a0a0;
  }
  .rates {
    display: grid;
    grid-template-columns: 112px 57px 57px;
    gap: 3px 8px;
    width: 259px;
    margin-top: 2px;
    padding: 3px 7px 2px;
    border: 1px solid #a0a0a0;
  }
  .rates label {
    white-space: nowrap;
  }
  .rates label + label {
    grid-column: span 2;
    margin-left: -8px;
  }
  .rates .sheet {
    grid-column: span 2;
    background: #f0f0f0;
  }

  .status {
    display: flex;
    gap: 4px;
    height: 19px;
    padding: 2px 1px 1px;
    border-top: 1px solid #d7d7d7;
    color: #fff;
    font-size: 12px;
    line-height: 16px;
  }
  .cell {
    display: flex;
    justify-content: center;
    flex: none;
    background: #f00;
    white-space: nowrap;
  }
  .joined {
    margin-left: -3px;
  }
  .cell i {
    margin-right: auto;
    font-size: 11px;
    font-style: normal;
  }
  .joined:not(.fill) {
    padding-right: 9px;
  }
  .total {
    width: 84px;
  }
  .fill {
    flex: 1;
  }

  .taskbar {
    display: flex;
    align-items: center;
    height: 48px;
    padding-bottom: 2px;
    border-top: 1px solid #c8bcb0;
    background: linear-gradient(90deg, #fbe8d6, #fbeedb 35%, #fbecd8 55%, #f4e0d6 75%, #eedcd8);
    color: #1b1b1b;
    font: 12px/16px 'Open Sans', sans-serif;
  }
  .weather {
    display: flex;
    align-items: center;
    flex: 1;
    gap: 3px;
    padding-left: 20px;
    text-align: left;
  }
  .weather small {
    color: #666;
    font-size: 12px;
  }
  .apps {
    display: flex;
    align-items: center;
    padding-left: 4px;
  }
  .apps button {
    display: grid;
    place-items: center;
    position: relative;
    width: 40px;
    height: 40px;
    margin-right: 4px;
    border-radius: 4px;
  }
  .apps .running::after {
    content: '';
    position: absolute;
    bottom: 1px;
    width: 6px;
    height: 3px;
    border-radius: 2px;
    background: #8a8580;
  }
  .apps .alert {
    background: #e8b0ac;
  }
  .apps .alert::after {
    background: #c42b1c;
  }
  .ring {
    fill: none;
    stroke: #fff;
    stroke-width: 1.5;
  }
  .search {
    display: flex;
    align-items: center;
    gap: 9px;
    width: 220px;
    height: 31px;
    margin: 0 4px 0 1px;
    padding: 0 5px 0 10px;
    border: 1px solid #e6d8c8;
    border-radius: 16px;
    background: #fef9f1;
    font-size: 13px;
  }
  .search svg:not(.art) {
    fill: none;
    stroke: #222;
    stroke-width: 2;
  }
  .search input[type='text'] {
    flex: 1;
    width: 0;
    padding: 0;
    border: 0;
    background: none;
  }
  .search input::placeholder {
    color: #555;
  }
  .tray {
    display: flex;
    align-items: center;
    justify-content: flex-end;
    flex: 1;
    gap: 17px;
    padding-right: 19px;
    text-align: right;
  }
  .tray svg {
    fill: none;
    stroke: #222;
    stroke-width: 1.2;
  }
  .tray .cloud {
    fill: #0f6cbd;
    stroke: none;
  }
  .tray .light {
    fill: #28a8ea;
    stroke: none;
  }
  .tray .mic {
    stroke: #2456b0;
  }
  .tray .sound {
    margin: 0 -2px 0 -11px;
  }

  .dialog {
    display: flex;
    flex-direction: column;
    position: absolute;
    top: 78px;
    left: 85px;
    width: 877px;
    height: 457px;
    border: 1px solid #888;
    background: #f0f0f0;
    box-shadow: 1px 2px 6px rgba(0, 0, 0, 0.2);
    font-size: 12px;
    line-height: 16px;
  }
  .dialog header {
    display: flex;
    align-items: center;
    gap: 5px;
    height: 31px;
    padding: 0 0 2px 8px;
    background: #fff;
  }
  .dialog .caption svg {
    stroke: #000;
  }
  .dialog .caption .off svg {
    stroke: #bbb;
  }
  .filters {
    display: flex;
    gap: 7px;
    padding: 3px 16px 0 13px;
  }
  .filter {
    flex: 1;
    padding-top: 3px;
  }
  .filter > label {
    display: block;
    height: 16px;
  }
  .filter #filter {
    flex: 1;
    height: 23px;
    margin-right: 1px;
  }
  .filter .row {
    gap: 4px;
  }
  .tool {
    width: 21px;
  }
  .filter .matches {
    display: grid;
    grid-template-columns: 128px 144px 1fr;
    gap: 0;
    margin-top: 4px;
  }
  .sort {
    width: 290px;
  }
  .sort span {
    display: block;
  }
  .sort .dropdown {
    display: flex;
    height: 23px;
    margin-top: 3px;
  }
  .sort .dropdown select {
    padding: 0 3px;
  }
  .list {
    flex: 1;
    margin: 10px 16px 0 13px;
  }
  .list table {
    width: 416px;
  }
  .code {
    width: 82px;
  }
  .selected td:last-child {
    background: #00f;
    color: #fff;
  }
  .answer {
    display: flex;
    align-items: flex-start;
    gap: 7px;
    height: 43px;
    padding: 11px 16px 0 5px;
  }
  .answer span {
    margin: -1px auto 0 0;
  }
  .answer .push {
    display: block;
    width: 73px;
  }
  .answer .primary {
    border: 2px solid #0078d7;
  }
</style>
